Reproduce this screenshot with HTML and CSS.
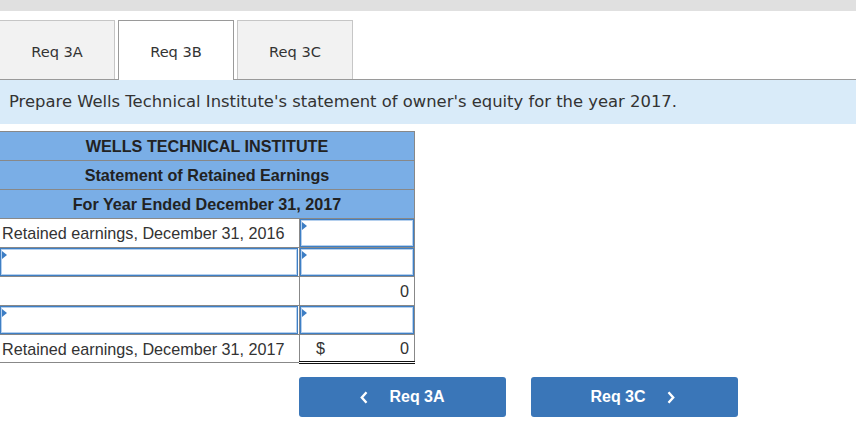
FILE: index.html
```html
<!DOCTYPE html>
<html>
<head>
<meta charset="utf-8">
<link rel="stylesheet" href="styles.css">
</head>
<body>
<div class="topbar"></div>
<div class="tabs">
  <div class="tab first">Req 3A</div>
  <div class="tab active">Req 3B</div>
  <div class="tab">Req 3C</div>
</div>
<div class="band">Prepare Wells Technical Institute's statement of owner's equity for the year 2017.</div>
<table class="stmt">
  <colgroup><col class="c1"><col class="c2"></colgroup>
  <tr><th colspan="2">WELLS TECHNICAL INSTITUTE</th></tr>
  <tr><th colspan="2">Statement of Retained Earnings</th></tr>
  <tr><th colspan="2">For Year Ended December 31, 2017</th></tr>
  <tr><td class="lbl txt">Retained earnings, December 31, 2016</td><td class="val"><div class="inp"></div></td></tr>
  <tr><td class="lbl"><div class="inp wide"></div></td><td class="val"><div class="inp"></div></td></tr>
  <tr><td class="lbl"></td><td class="val num">0</td></tr>
  <tr><td class="lbl"><div class="inp wide"></div></td><td class="val"><div class="inp"></div></td></tr>
  <tr class="last"><td class="lbl txt">Retained earnings, December 31, 2017</td><td class="val total"><span>$</span><span>0</span></td></tr>
</table>
<div class="nav">
  <button class="btn"><svg class="chev" width="8" height="13" viewBox="0 0 8 13"><path d="M6.5 1.2 L1.8 6.5 L6.5 11.8" fill="none" stroke="#fff" stroke-width="2.4"/></svg><span>Req 3A</span></button>
  <button class="btn next"><span>Req 3C</span><svg class="chev" width="8" height="13" viewBox="0 0 8 13"><path d="M1.5 1.2 L6.2 6.5 L1.5 11.8" fill="none" stroke="#fff" stroke-width="2.4"/></svg></button>
</div>
</body>
</html>
```

FILE: styles.css
```css
html, body {
  margin: 0;
  padding: 0;
  background: #fff;
}
.topbar {
  height: 11px;
  background: #e0e0e0;
}
.tabs {
  display: flex;
  align-items: flex-end;
  gap: 3px;
  margin-top: 9px;
  border-bottom: 1px solid #9a9a9a;
  height: 59px;
}
.tab {
  box-sizing: border-box;
  width: 116px;
  height: 59px;
  padding-top: 2px;
  border: 1px solid #c6c6c6;
  border-bottom: none;
  background: #f2f2f2;
  font-family: "DejaVu Sans", Verdana, sans-serif;
  font-size: 14.6px;
  color: #333;
  display: flex;
  align-items: center;
  justify-content: center;
}
.tab.first {
  margin-left: -1px;
}
.tab.active {
  height: 60px;
  margin-bottom: -1px;
  background: #fff;
  border-color: #9a9a9a;
  position: relative;
}
.band {
  height: 44px;
  line-height: 44px;
  background: #d9ebf9;
  padding-left: 9px;
  font-family: "DejaVu Sans", Verdana, sans-serif;
  font-size: 16.4px;
  color: #333;
  white-space: nowrap;
}
.stmt {
  margin-top: 7px;
  margin-left: -1px;
  border-collapse: collapse;
  table-layout: fixed;
  width: 415px;
  font-family: "Liberation Sans", Arial, sans-serif;
  font-size: 16.2px;
  line-height: 18px;
  color: #333;
}
.c1 { width: 300px; }
.c2 { width: 115px; }
.stmt th {
  height: 27px;
  padding: 0 0 1px;
  background: #7aaee6;
  border: 1px solid #888;
  font-weight: bold;
  font-size: 16.2px;
  color: #222;
  text-align: center;
}
.stmt td {
  height: 28px;
  padding: 0;
  border: 1px solid #888;
}
.stmt td.lbl {
  padding-left: 2px;
  white-space: nowrap;
}
.stmt td.txt {
  height: 27px;
  padding-bottom: 1px;
}
.stmt tr.last td {
  height: 26px;
  padding-bottom: 0;
}
.lbl .inp.wide {
  margin-left: -2px;
  margin-right: 1px;
}
.stmt td.num {
  text-align: right;
  padding: 0 5px 1px 0;
  height: 27px;
}
.stmt td.total {
  border-bottom: 3px double #111;
  padding: 0 5px 0 16px;
}
.total span:first-child {
  float: left;
}
.total span:last-child {
  float: right;
}
.inp {
  box-sizing: border-box;
  height: 28px;
  border: 1px solid #3f7fc4;
  box-shadow: inset 0 0 0 1px #b5d0ee;
  background: #fff;
  position: relative;
}
.inp::before {
  content: "";
  position: absolute;
  left: 1px;
  top: 2px;
  border-left: 5px solid #3c7dc4;
  border-top: 4px solid transparent;
  border-bottom: 4px solid transparent;
}
.nav {
  display: flex;
  gap: 25px;
  padding-left: 299px;
  margin-top: 13px;
}
.btn {
  width: 207px;
  height: 40px;
  border: none;
  border-radius: 3px;
  background: #3a76b8;
  color: #fff;
  font-family: "Liberation Sans", Arial, sans-serif;
  font-weight: bold;
  font-size: 16px;
  display: flex;
  align-items: center;
  justify-content: center;
  gap: 21px;
  padding: 0;
}
.btn.next {
  padding-right: 4px;
}
.chev {
  display: block;
}
```
